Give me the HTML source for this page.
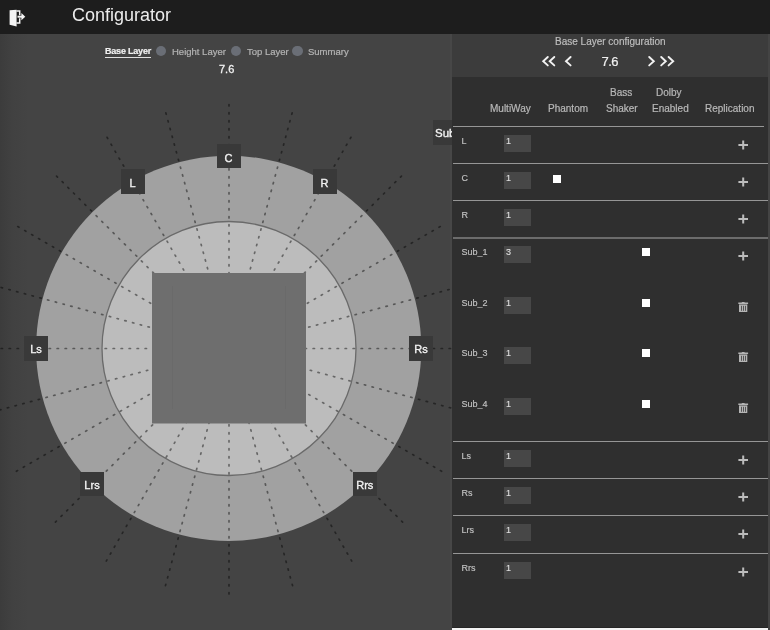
<!DOCTYPE html>
<html><head><meta charset="utf-8">
<style>
*{margin:0;padding:0;box-sizing:border-box}
html,body{width:770px;height:630px;overflow:hidden;background:#444;font-family:"Liberation Sans",sans-serif}
#wrap{position:absolute;left:0;top:0;width:770px;height:630px;will-change:transform}
#hdr{position:absolute;left:0;top:0;width:770px;height:34px;background:#1d1d1d}
#title{position:absolute;left:72px;top:4px;font-size:18px;color:#ececec;line-height:22px}
#exit{position:absolute;left:0;top:0}
#left{position:absolute;left:0;top:34px;width:452px;height:596px;background:linear-gradient(to right,#3c3c3c 0px,#414141 12px,#444 28px,#444 100%)}
#diag{position:absolute;left:0;top:0}
.lab{position:absolute;height:24.5px;background:#393939;color:#f2f2f2;font-size:11px;text-align:center}
.lab span{position:absolute;left:0;right:0;top:9.05px;line-height:11px;-webkit-text-stroke:0.35px #f2f2f2;}
.lab.sub{width:40px;}
.lab.sub span{text-align:left;left:2px;font-size:11.5px;top:8px}
.tabs{position:absolute;top:45.6px;font-size:9.5px;color:#b4b4b4;line-height:11px;white-space:nowrap;-webkit-text-stroke:0.2px currentColor}
.dot{position:absolute;top:45.8px;width:10.5px;height:10.5px;border-radius:50%;background:#6a6e76}
#rp{position:absolute;left:452px;top:34px;width:316px;height:596px;background:#2f2f2f}
#rptop{position:absolute;left:0;top:0;width:316px;height:43px;background:#3c3c3c}
.t{position:absolute;white-space:nowrap;line-height:12px;-webkit-text-stroke:0.2px currentColor}
.row{position:absolute;left:0;width:318px}
.hl{position:absolute;left:1px;height:1px;background:#969696}
.rl{position:absolute;left:9.5px;top:9.9px;font-size:9px;color:#c2c2c2;-webkit-text-stroke:0.15px #c2c2c2;line-height:10px}
.inp{position:absolute;left:52px;top:9px;width:26.5px;height:16.5px;padding-top:1px;background:#474747;color:#e0e0e0;font-size:9px;line-height:11px;-webkit-text-stroke:0.1px #e0e0e0;padding-left:2px}
.cb{position:absolute;top:12px;width:8px;height:8px;background:#fff}
.plus{position:absolute;left:286px;top:14px;line-height:0}
.trash{position:absolute;left:286px;top:14px;line-height:0}
</style></head><body><div id="wrap">
<div id="hdr">
 <svg id="exit" width="30" height="34" viewBox="0 0 30 34">
  <path d="M9.6 10.2 L16.6 9.8 L16.6 26.4 L9.6 24.7 Z" fill="#f4f4f4"/>
  <path d="M16.4 10.9 H19.7 V15.2 M19.7 18.3 V22.9 H16.4" stroke="#f4f4f4" stroke-width="1.5" fill="none"/>
  <path d="M17.5 16.7 H22.3" stroke="#f4f4f4" stroke-width="2"/>
  <path d="M21.4 13.1 L25.3 16.7 L21.4 20.2 Z" fill="#f4f4f4"/>
 </svg>
 <div id="title">Configurator</div>
</div>
<div id="left"></div>
<div style="position:absolute;left:450px;top:34px;width:2px;height:596px;background:#474747"></div>
<svg id="diag" width="770" height="630" viewBox="0 0 770 630">
 <circle cx="228.7" cy="348.3" r="192.6" fill="#a1a1a1"/>
 <circle cx="229" cy="348.5" r="127" fill="#bcbcbc" stroke="#6a6a6a" stroke-width="1.3"/>
 <g stroke="rgba(0,0,0,0.45)" stroke-width="1.7" stroke-linecap="round" stroke-dasharray="1.4 6.6" stroke-dashoffset="-0.8" fill="none">
<line x1="-15.70" y1="348.50" x2="478.50" y2="348.50"/>
<line x1="-7.36" y1="285.17" x2="470.00" y2="413.08"/>
<line x1="17.08" y1="226.15" x2="445.07" y2="473.25"/>
<line x1="55.97" y1="175.47" x2="405.42" y2="524.92"/>
<line x1="106.65" y1="136.58" x2="353.75" y2="564.57"/>
<line x1="165.67" y1="112.14" x2="293.58" y2="589.50"/>
<line x1="229.00" y1="103.80" x2="229.00" y2="598.00"/>
<line x1="292.33" y1="112.14" x2="164.42" y2="589.50"/>
<line x1="351.35" y1="136.58" x2="104.25" y2="564.57"/>
<line x1="402.03" y1="175.47" x2="52.58" y2="524.92"/>
<line x1="440.92" y1="226.15" x2="12.93" y2="473.25"/>
<line x1="465.36" y1="285.17" x2="-12.00" y2="413.08"/>
 </g>
 <rect x="152" y="273" width="154" height="150.5" fill="#6e6e6e"/>
 <g stroke="#6a6a6a" stroke-width="1">
  <line x1="172.5" y1="286" x2="172.5" y2="409"/>
  <line x1="285.5" y1="286" x2="285.5" y2="409"/>
 </g>
</svg>
<div class="lab" style="left:216.5px;top:143.5px;width:24px"><span>C</span></div><div class="lab" style="left:120.5px;top:169px;width:24px"><span>L</span></div><div class="lab" style="left:312.5px;top:169px;width:24px"><span>R</span></div><div class="lab" style="left:24px;top:336px;width:24px"><span style="top:8.05px">Ls</span></div><div class="lab" style="left:409px;top:336px;width:24px"><span style="top:8.05px">Rs</span></div><div class="lab" style="left:80px;top:471.7px;width:24px"><span style="top:8.05px">Lrs</span></div><div class="lab" style="left:352.8px;top:471.7px;width:24px"><span style="top:8.05px">Rrs</span></div><div class="lab sub" style="left:433px;top:120px;"><span>Sub</span></div>
<div class="tabs" style="left:105px;font-weight:bold;color:#f0f0f0;font-size:9px;letter-spacing:-0.2px">Base Layer</div>
<div style="position:absolute;left:105px;top:57px;width:46px;height:1px;background:#e0e0e0"></div>
<div class="dot" style="left:155.7px"></div>
<div class="tabs" style="left:172px">Height Layer</div>
<div class="dot" style="left:230.7px"></div>
<div class="tabs" style="left:247px">Top Layer</div>
<div class="dot" style="left:292.2px"></div>
<div class="tabs" style="left:308px">Summary</div>
<div class="t" style="left:219px;top:63px;font-size:11px;color:#f2f2f2;-webkit-text-stroke:0.3px #f2f2f2">7.6</div>
<div id="rp">
 <div id="rptop"></div>
 <div class="t" style="left:103px;top:2px;font-size:10px;color:#bdbdbd">Base Layer configuration</div>
 <div class="t" style="left:149.5px;top:21px;font-size:13px;line-height:14px;letter-spacing:-0.5px;color:#f0f0f0">7.6</div>
 <div class="t" style="left:158px;top:53px;font-size:10px;color:#b8b8b8">Bass</div>
 <div class="t" style="left:204px;top:53px;font-size:10px;color:#b8b8b8">Dolby</div>
 <div class="t" style="left:38px;top:69px;font-size:10px;color:#b8b8b8">MultiWay</div>
 <div class="t" style="left:96px;top:69px;font-size:10px;color:#b8b8b8">Phantom</div>
 <div class="t" style="left:154px;top:69px;font-size:10px;color:#b8b8b8">Shaker</div>
 <div class="t" style="left:200px;top:69px;font-size:10px;color:#b8b8b8">Enabled</div>
 <div class="t" style="left:253px;top:69px;font-size:10px;color:#b8b8b8">Replication</div>
</div>
<svg width="770" height="80" viewBox="0 0 770 80" style="position:absolute;left:0;top:0"><g stroke="#f2f2f2" stroke-width="1.9" fill="none" stroke-linecap="round" stroke-linejoin="miter"><polyline points="547.8,57 543.2,61.2 547.8,65.4"/><polyline points="554.3,57 549.7,61.2 554.3,65.4"/><polyline points="570.6,57 566,61.2 570.6,65.4"/><polyline points="649.2,57 653.8,61.2 649.2,65.4"/><polyline points="661.2,57 665.8,61.2 661.2,65.4"/><polyline points="668.6,57 673.2,61.2 668.6,65.4"/></g></svg>
<div id="tbl" style="position:absolute;left:452px;top:0;width:318px;height:630px">
<div class="row" style="top:126px;height:37px"><div class="rl">L</div><div class="inp">1</div><div class="plus"><svg width="10" height="10" viewBox="0 0 10 10"><path d="M5.2 0.4V9.5M0.4 4.95H10" stroke="#bcbcbc" stroke-width="2"/></svg></div></div>
<div class="row" style="top:163px;height:37px"><div class="rl">C</div><div class="inp">1</div><div class="cb" style="left:101px;top:12px"></div><div class="plus"><svg width="10" height="10" viewBox="0 0 10 10"><path d="M5.2 0.4V9.5M0.4 4.95H10" stroke="#bcbcbc" stroke-width="2"/></svg></div></div>
<div class="row" style="top:200px;height:37px"><div class="rl">R</div><div class="inp">1</div><div class="plus"><svg width="10" height="10" viewBox="0 0 10 10"><path d="M5.2 0.4V9.5M0.4 4.95H10" stroke="#bcbcbc" stroke-width="2"/></svg></div></div>
<div class="row" style="top:237px;height:51px"><div class="rl">Sub_1</div><div class="inp">3</div><div class="cb" style="left:190px;top:10.5px"></div><div class="plus"><svg width="10" height="10" viewBox="0 0 10 10"><path d="M5.2 0.4V9.5M0.4 4.95H10" stroke="#bcbcbc" stroke-width="2"/></svg></div></div>
<div class="row" style="top:288px;height:50px"><div class="rl">Sub_2</div><div class="inp">1</div><div class="cb" style="left:190px;top:10.5px"></div><div class="trash"><svg width="11" height="11" viewBox="0 0 11 11"><path d="M3.8 0h2.8v0.4h3.5v1.7h-9.8v-1.7h3.5z" fill="#b4b4b4"/><rect x="1" y="2.4" width="8.3" height="7.6" fill="#b4b4b4"/><path d="M3.5 3.8v5M5.5 3.8v5M7.5 3.8v5" stroke="#545454" stroke-width="1"/></svg></div></div>
<div class="row" style="top:338px;height:51px"><div class="rl">Sub_3</div><div class="inp">1</div><div class="cb" style="left:190px;top:10.5px"></div><div class="trash"><svg width="11" height="11" viewBox="0 0 11 11"><path d="M3.8 0h2.8v0.4h3.5v1.7h-9.8v-1.7h3.5z" fill="#b4b4b4"/><rect x="1" y="2.4" width="8.3" height="7.6" fill="#b4b4b4"/><path d="M3.5 3.8v5M5.5 3.8v5M7.5 3.8v5" stroke="#545454" stroke-width="1"/></svg></div></div>
<div class="row" style="top:389px;height:52px"><div class="rl">Sub_4</div><div class="inp">1</div><div class="cb" style="left:190px;top:10.5px"></div><div class="trash"><svg width="11" height="11" viewBox="0 0 11 11"><path d="M3.8 0h2.8v0.4h3.5v1.7h-9.8v-1.7h3.5z" fill="#b4b4b4"/><rect x="1" y="2.4" width="8.3" height="7.6" fill="#b4b4b4"/><path d="M3.5 3.8v5M5.5 3.8v5M7.5 3.8v5" stroke="#545454" stroke-width="1"/></svg></div></div>
<div class="row" style="top:441px;height:37px"><div class="rl">Ls</div><div class="inp">1</div><div class="plus"><svg width="10" height="10" viewBox="0 0 10 10"><path d="M5.2 0.4V9.5M0.4 4.95H10" stroke="#bcbcbc" stroke-width="2"/></svg></div></div>
<div class="row" style="top:478px;height:37px"><div class="rl">Rs</div><div class="inp">1</div><div class="plus"><svg width="10" height="10" viewBox="0 0 10 10"><path d="M5.2 0.4V9.5M0.4 4.95H10" stroke="#bcbcbc" stroke-width="2"/></svg></div></div>
<div class="row" style="top:515px;height:38px"><div class="rl">Lrs</div><div class="inp">1</div><div class="plus"><svg width="10" height="10" viewBox="0 0 10 10"><path d="M5.2 0.4V9.5M0.4 4.95H10" stroke="#bcbcbc" stroke-width="2"/></svg></div></div>
<div class="row" style="top:553px;height:37px"><div class="rl">Rrs</div><div class="inp">1</div><div class="plus"><svg width="10" height="10" viewBox="0 0 10 10"><path d="M5.2 0.4V9.5M0.4 4.95H10" stroke="#bcbcbc" stroke-width="2"/></svg></div></div>
<div class="hl" style="top:126px;width:311px"></div>
<div class="hl" style="top:163px;width:315px"></div>
<div class="hl" style="top:200px;width:315px"></div>
<div class="hl" style="top:237px;width:315px;height:2px;background:#6c6c6c"></div>
<div class="hl" style="top:441px;width:315px"></div>
<div class="hl" style="top:478px;width:315px"></div>
<div class="hl" style="top:515px;width:315px"></div>
<div class="hl" style="top:553px;width:315px"></div>
 <div style="position:absolute;left:0;top:627px;width:316px;height:1px;background:#262626"></div>
 <div style="position:absolute;left:0;top:628px;width:316px;height:2px;background:#f4f4f4"></div>
</div>
</div></body></html>
